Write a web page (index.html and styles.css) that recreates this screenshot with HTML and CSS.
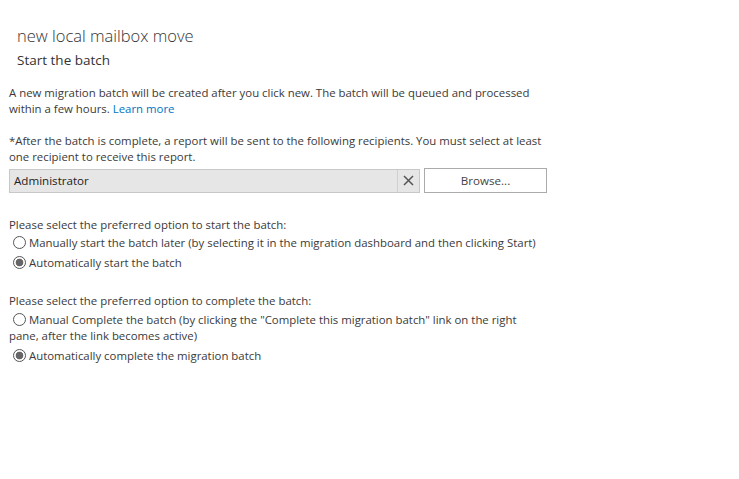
FILE: index.html
```html
<!DOCTYPE html>
<html>
<head>
<meta charset="utf-8">
<link rel="stylesheet" href="styles.css">
</head>
<body>
<div class="header">
  <div class="title">new local mailbox move</div>
  <div class="subtitle">Start the batch</div>
</div>
<div class="content">
  <p class="para p1">A new migration batch will be created after you click new. The batch will be queued and processed within a few hours. <a class="link" href="#">Learn more</a></p>
  <p class="para p2">*After the batch is complete, a report will be sent to the following recipients. You must select at least one recipient to receive this report.</p>
  <div class="picker">
    <div class="field">
      <span class="field-text">Administrator</span>
      <span class="clear"><svg width="11" height="11" viewBox="0 0 11 11"><path d="M1 1 L10 10 M10 1 L1 10" stroke="#555" stroke-width="1.5" fill="none"/></svg></span>
    </div>
    <button class="browse">Browse...</button>
  </div>
  <div class="section s1">
    <div class="label">Please select the preferred option to start the batch:</div>
    <label class="opt"><input type="radio" name="start"><span>Manually start the batch later (by selecting it in the migration dashboard and then clicking Start)</span></label>
    <label class="opt"><input type="radio" name="start" checked><span>Automatically start the batch</span></label>
  </div>
  <div class="section s2">
    <div class="label">Please select the preferred option to complete the batch:</div>
    <label class="opt wrap"><input type="radio" name="complete"><span>Manual Complete the batch (by clicking the "Complete this migration batch" link on the right pane, after the link becomes active)</span></label>
    <label class="opt"><input type="radio" name="complete" checked><span>Automatically complete the migration batch</span></label>
  </div>
</div>
</body>
</html>
```
FILE: styles.css
```css
html, body {
  margin: 0;
  padding: 0;
  background: #fff;
}
body {
  font-family: "Segoe UI", "Open Sans", "Noto Sans", sans-serif;
  font-size: 11.4px;
  color: #3a3a3a;
  width: 739px;
  height: 479px;
  overflow: hidden;
}
.header {
  padding: 25px 0 0 17px;
}
.title {
  font-size: 16.5px;
  font-weight: 300;
  line-height: 22px;
  color: #333;
}
.subtitle {
  font-size: 13.5px;
  line-height: 20px;
  margin-top: 3px;
  color: #333;
}
.content {
  padding: 15px 0 0 9px;
  width: 540px;
}
.para {
  margin: 0;
  line-height: 16px;
}
.p2 {
  margin-top: 16px;
}
.link {
  color: #0072c6;
  text-decoration: none;
}
.picker {
  display: flex;
  align-items: center;
  gap: 4px;
  margin-top: 3px;
}
.field {
  width: 409px;
  height: 22px;
  border: 1px solid #c8c8c8;
  background: #e6e6e6;
  display: flex;
  align-items: center;
  box-sizing: content-box;
}
.field-text {
  flex: 1;
  padding-left: 4px;
  color: #222;
  font-size: 11.6px;
}
.clear {
  width: 21px;
  height: 22px;
  border-left: 1px solid #d0d0d0;
  display: flex;
  align-items: center;
  justify-content: center;
}
.browse {
  width: 123px;
  height: 25px;
  border: 1px solid #ababab;
  background: #fff;
  font-family: inherit;
  font-size: 11.6px;
  color: #444;
  padding: 0;
}
.section {
  display: flex;
  flex-direction: column;
}
.s1 {
  margin-top: 24px;
}
.s2 {
  margin-top: 22px;
}
.label {
  line-height: 16px;
}
.opt {
  display: block;
  line-height: 16px;
  margin-top: 2px;
  padding-left: 4px;
}
.opt + .opt {
  margin-top: 4px;
}
.opt.wrap {
  padding-left: 0;
  text-indent: 4px;
  margin-top: 3px;
}
.opt input {
  appearance: none;
  -webkit-appearance: none;
  width: 13px;
  height: 13px;
  border: 1px solid #555;
  border-radius: 50%;
  margin: 0 3px 0 0;
  vertical-align: -2px;
  box-sizing: border-box;
  background: #fff;
  text-indent: 0;
}
.opt input:checked {
  background: radial-gradient(circle, #666 0, #666 3.5px, #fff 4.2px);
}
```
